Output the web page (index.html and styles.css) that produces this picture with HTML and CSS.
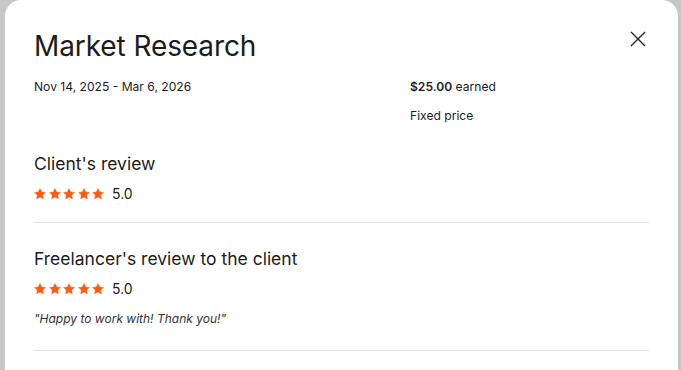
FILE: index.html
```html
<!DOCTYPE html>
<html lang="en">
<head>
<meta charset="utf-8">
<title>Market Research</title>
<link rel="stylesheet" href="styles.css">
</head>
<body>
<div class="backdrop">
  <div class="modal">
    <div class="header">
      <h1 class="title">Market Research</h1>
      <button class="close" aria-label="Close">
        <svg width="16" height="16" viewBox="0 0 16 16"><path d="M1 1L15 15M15 1L1 15" stroke="#222" stroke-width="1.4" fill="none"/></svg>
      </button>
    </div>
    <div class="meta">
      <div class="dates">Nov 14, 2025 - Mar 6, 2026</div>
      <div class="earn">
        <div><strong>$25.00</strong> earned</div>
        <div class="ptype">Fixed price</div>
      </div>
    </div>
    <section class="review">
      <h2 class="rtitle">Client's review</h2>
      <div class="rating">
        <span class="stars">
          <svg viewBox="0 0 24 24"><path d="M12 1L15.29 7.97L22.94 8.95L17.33 14.23L18.76 21.8L12 18.1L5.24 21.8L6.67 14.23L1.06 8.95L8.71 7.97Z"/></svg>
          <svg viewBox="0 0 24 24"><path d="M12 1L15.29 7.97L22.94 8.95L17.33 14.23L18.76 21.8L12 18.1L5.24 21.8L6.67 14.23L1.06 8.95L8.71 7.97Z"/></svg>
          <svg viewBox="0 0 24 24"><path d="M12 1L15.29 7.97L22.94 8.95L17.33 14.23L18.76 21.8L12 18.1L5.24 21.8L6.67 14.23L1.06 8.95L8.71 7.97Z"/></svg>
          <svg viewBox="0 0 24 24"><path d="M12 1L15.29 7.97L22.94 8.95L17.33 14.23L18.76 21.8L12 18.1L5.24 21.8L6.67 14.23L1.06 8.95L8.71 7.97Z"/></svg>
          <svg viewBox="0 0 24 24"><path d="M12 1L15.29 7.97L22.94 8.95L17.33 14.23L18.76 21.8L12 18.1L5.24 21.8L6.67 14.23L1.06 8.95L8.71 7.97Z"/></svg>
        </span>
        <span class="score">5.0</span>
      </div>
    </section>
    <section class="review second">
      <h2 class="rtitle">Freelancer's review to the client</h2>
      <div class="rating">
        <span class="stars">
          <svg viewBox="0 0 24 24"><path d="M12 1L15.29 7.97L22.94 8.95L17.33 14.23L18.76 21.8L12 18.1L5.24 21.8L6.67 14.23L1.06 8.95L8.71 7.97Z"/></svg>
          <svg viewBox="0 0 24 24"><path d="M12 1L15.29 7.97L22.94 8.95L17.33 14.23L18.76 21.8L12 18.1L5.24 21.8L6.67 14.23L1.06 8.95L8.71 7.97Z"/></svg>
          <svg viewBox="0 0 24 24"><path d="M12 1L15.29 7.97L22.94 8.95L17.33 14.23L18.76 21.8L12 18.1L5.24 21.8L6.67 14.23L1.06 8.95L8.71 7.97Z"/></svg>
          <svg viewBox="0 0 24 24"><path d="M12 1L15.29 7.97L22.94 8.95L17.33 14.23L18.76 21.8L12 18.1L5.24 21.8L6.67 14.23L1.06 8.95L8.71 7.97Z"/></svg>
          <svg viewBox="0 0 24 24"><path d="M12 1L15.29 7.97L22.94 8.95L17.33 14.23L18.76 21.8L12 18.1L5.24 21.8L6.67 14.23L1.06 8.95L8.71 7.97Z"/></svg>
        </span>
        <span class="score">5.0</span>
      </div>
      <p class="quote">"Happy to work with! Thank you!"</p>
    </section>
  </div>
</div>
</body>
</html>
```
FILE: styles.css
```css
html, body {
  margin: 0;
  padding: 0;
  height: 100%;
  overflow: hidden;
}
body {
  background: #c6c7c9;
  font-family: Inter, "Noto Sans", sans-serif;
  color: #1c1c1c;
}
.backdrop {
  padding: 0 3px 0 5px;
  height: 100%;
}
.modal {
  background: #fff;
  border-radius: 16px 16px 0 0;
  height: 100%;
  padding: 0 29px;
  box-sizing: border-box;
}
.header {
  display: flex;
  justify-content: space-between;
  align-items: flex-start;
  padding-top: 29px;
}
.title {
  margin: 0;
  font-size: 28px;
  font-weight: 400;
  line-height: 34px;
  letter-spacing: -0.1px;
}
.close {
  background: none;
  border: 0;
  padding: 0;
  margin: 2px 3px 0 0;
  width: 16px;
  height: 16px;
  display: flex;
}
.meta {
  display: grid;
  grid-template-columns: 376px 1fr;
  font-size: 12.1px;
  line-height: 18px;
  margin-top: 15px;
}
.earn strong {
  font-weight: 600;
}
.ptype {
  margin-top: 11px;
}
.review {
  padding: 28px 0 19px;
  border-bottom: 1px solid #e1e6ea;
}
.review.second {
  padding: 25px 0 22px;
}
.rtitle {
  margin: 0;
  font-size: 17.5px;
  font-weight: 400;
  line-height: 22px;
}
.rating {
  display: flex;
  align-items: center;
  margin-top: 10px;
}
.stars {
  display: flex;
  gap: 2.5px;
}
.stars svg {
  width: 12px;
  height: 12px;
  fill: #fb5b11;
  stroke: #fb5b11;
  stroke-width: 0.8;
  stroke-linejoin: round;
}
.score {
  font-size: 14px;
  line-height: 18px;
  margin-left: 8px;
}
.quote {
  margin: 12px 0 0;
  font-size: 12px;
  font-style: italic;
  line-height: 18px;
  color: #333;
}
```
